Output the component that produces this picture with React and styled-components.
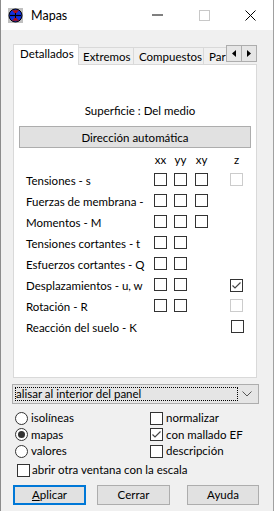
import React from "react";
import styled, { createGlobalStyle, css } from "styled-components";

const Global = createGlobalStyle`
  html, body { margin: 0; padding: 0; background: #ffffff; }
  body { font-family: Lato, "Liberation Sans", sans-serif; font-size: 11.5px; color: #000; }
  * { box-sizing: border-box; }
`;

const Window = styled.div`
  width: 274px;
  height: 511px;
  border-left: 1px solid #8c8c8c;
  border-right: 1px solid #a0a0a0;
  display: flex;
  flex-direction: column;
  background: #f0f0f0;
`;

const TitleBar = styled.div`
  height: 30px;
  background: #ffffff;
  display: flex;
  align-items: center;
  padding-left: 7px;
`;

const TitleText = styled.div`
  font-size: 12.5px;
  margin-left: 8px;
  flex: 1;
`;

const CaptionButton = styled.div`
  width: 46px;
  height: 30px;
  display: flex;
  align-items: center;
  justify-content: center;
`;

const Body = styled.div`
  flex: 1;
  padding: 14px 0 0 12px;
  display: flex;
  flex-direction: column;
`;

const TabStrip = styled.div`
  width: 244px;
  height: 21px;
  display: flex;
  align-items: flex-end;
  margin-bottom: -1px;
  position: relative;
  z-index: 1;
`;

const TabList = styled.div`
  flex: 1;
  height: 100%;
  display: flex;
  align-items: flex-end;
  overflow: hidden;
`;

const Tab = styled.div`
  flex: none;
  width: ${(p) => p.$w}px;
  padding-left: ${(p) => p.$pl}px;
  border: 1px solid #d9d9d9;
  border-bottom: none;
  display: flex;
  align-items: center;
  white-space: nowrap;
  overflow: hidden;
  ${(p) =>
    p.$active
      ? css`
          height: 21px;
          background: #ffffff;
          padding-bottom: 3px;
        `
      : css`
          height: 17px;
          margin-bottom: 1px;
          margin-left: -1px;
          background: #f0f0f0;
        `}
`;

const ArrowGroup = styled.div`
  align-self: flex-start;
  margin-top: 1px;
  display: flex;
`;

const ArrowButton = styled.div`
  width: 16px;
  height: 17px;
  background: #e6e6e6;
  border: 1px solid #adadad;
  margin-left: ${(p) => (p.$first ? 0 : -1)}px;
  display: flex;
  align-items: center;
  justify-content: center;
`;

const Panel = styled.div`
  width: 244px;
  height: 314px;
  background: #ffffff;
  border: 1px solid #d9d9d9;
  display: flex;
  flex-direction: column;
  padding: 38px 5px 0 5px;
`;

const Surface = styled.div`
  text-align: center;
  height: 16px;
  line-height: 16px;
  padding-left: 10px;
`;

const PushButton = styled.div`
  height: ${(p) => p.$h || 20}px;
  width: ${(p) => (p.$w ? `${p.$w}px` : "auto")};
  background: #e1e1e1;
  border: 1px solid ${(p) => (p.$default ? "#0078d7" : "#adadad")};
  box-shadow: ${(p) => (p.$default ? "inset 0 0 0 1px #0078d7" : "none")};
  margin-left: ${(p) => p.$ml || 0}px;
  margin-top: ${(p) => p.$mt || 0}px;
  display: flex;
  align-items: center;
  justify-content: center;
`;

const Grid = styled.div`
  margin-top: 2px;
  padding-left: 7px;
  display: grid;
  grid-template-columns: 128px 20px 21px 35px 13px;
  grid-auto-rows: 21px;
  grid-template-rows: 20px;
  align-items: center;
`;

const Head = styled.div`
  width: 13px;
  display: flex;
  justify-content: center;
  white-space: nowrap;
  line-height: 14px;
`;

const Label = styled.div`
  white-space: nowrap;
  line-height: 14px;
`;

const Box = styled.span`
  width: 13px;
  height: 13px;
  background: #ffffff;
  border: 1px solid ${(p) => (p.$disabled ? "#cccccc" : "#333333")};
  display: inline-flex;
  align-items: center;
  justify-content: center;
  flex: none;
  margin-left: ${(p) => p.$ml || 0}px;
`;

const Check = ({ checked, disabled, ml }) => (
  <Box $disabled={disabled} $ml={ml}>
    {checked && (
      <svg width="11" height="11" viewBox="0 0 11 11">
        <path d="M1.5 5.5 L4 8 L9.5 2.5" fill="none" stroke="#444" strokeWidth="1.2" />
      </svg>
    )}
  </Box>
);

const Dropdown = styled.div`
  width: 247px;
  height: 20px;
  margin: 6px 0 0 -1px;
  background: #e5e5e5;
  border: 1px solid #adadad;
  display: flex;
  align-items: center;
  padding: 2px;
`;

const FocusRect = styled.div`
  width: 223px;
  height: 100%;
  border: 1px dotted #000;
  display: flex;
  align-items: center;
  white-space: nowrap;
  line-height: 14px;
`;

const Chevron = styled.div`
  flex: 1;
  display: flex;
  justify-content: center;
`;

const Options = styled.div`
  margin-top: 6px;
  padding-left: 2px;
  display: grid;
  grid-template-columns: 135px auto;
  grid-auto-rows: 16.5px;
  align-items: center;
`;

const Option = styled.div`
  display: flex;
  align-items: center;
  gap: 3px;
  white-space: nowrap;
  line-height: 14px;
`;

const Radio = styled.span`
  width: 13px;
  height: 13px;
  border-radius: 50%;
  border: 1px solid #333333;
  background: #ffffff;
  display: inline-flex;
  align-items: center;
  justify-content: center;
  flex: none;
  &::after {
    content: "";
    width: 7px;
    height: 7px;
    border-radius: 50%;
    background: ${(p) => (p.$on ? "#333333" : "transparent")};
  }
`;

const ScaleRow = styled.div`
  height: 17px;
  margin-top: 2px;
  padding-left: 4px;
  display: flex;
  align-items: center;
  gap: 2px;
  white-space: nowrap;
  line-height: 14px;
`;

const ButtonRow = styled.div`
  display: flex;
  margin-top: 6px;
`;

const Access = styled.span`
  text-decoration: underline;
`;

const AppIcon = () => (
  <svg width="15" height="15" viewBox="0 0 15 15">
    <rect x="0" y="0" width="15" height="15" fill="#c0c0c0" />
    <circle cx="7.5" cy="7.5" r="6.5" fill="#1030e0" stroke="#000" strokeWidth="1" />
    <path d="M4 2.2 L11 2.2 L7.5 6 Z" fill="#b01010" />
    <path d="M4 12.8 L11 12.8 L7.5 9 Z" fill="#b01010" />
    <path d="M2 7.5 H13" stroke="#000" strokeWidth="1.2" />
    <path d="M7.5 5 V10" stroke="#000" strokeWidth="1" />
  </svg>
);

const rows = [
  { label: "Tensiones - s", xx: 1, yy: 1, xy: 1, z: "disabled" },
  { label: "Fuerzas de membrana -", xx: 1, yy: 1, xy: 1 },
  { label: "Momentos - M", xx: 1, yy: 1, xy: 1 },
  { label: "Tensiones cortantes - t", xx: 1, yy: 1 },
  { label: "Esfuerzos cortantes - Q", xx: 1, yy: 1 },
  { label: "Desplazamientos - u, w", xx: 1, yy: 1, z: "checked" },
  { label: "Rotación - R", xx: 1, yy: 1, z: "disabled" },
  { label: "Reacción del suelo - K", z: "normal" },
];

export default function App() {
  return (
    <>
      <Global />
      <Window>
        <TitleBar>
          <AppIcon />
          <TitleText>Mapas</TitleText>
          <CaptionButton>
            <svg width="12" height="2" viewBox="0 0 12 2">
              <path d="M0 1 H11" stroke="#000" strokeWidth="1" />
            </svg>
          </CaptionButton>
          <CaptionButton>
            <svg width="11" height="11" viewBox="0 0 11 11">
              <rect x="0.5" y="0.5" width="10" height="10" fill="none" stroke="#c8c8c8" />
            </svg>
          </CaptionButton>
          <CaptionButton>
            <svg width="11" height="11" viewBox="0 0 11 11">
              <path d="M0.5 0.5 L10.5 10.5 M10.5 0.5 L0.5 10.5" stroke="#000" strokeWidth="1" />
            </svg>
          </CaptionButton>
        </TitleBar>
        <Body>
          <TabStrip>
            <TabList>
              <Tab $active $w={66} $pl={6}>Detallados</Tab>
              <Tab $w={56} $pl={4}>Extremos</Tab>
              <Tab $w={71} $pl={5}>Compuestos</Tab>
              <Tab $w={40} $pl={5}>Par</Tab>
            </TabList>
            <ArrowGroup>
              <ArrowButton $first>
                <svg width="4" height="7" viewBox="0 0 4 7">
                  <path d="M4 0 L0 3.5 L4 7 Z" fill="#000" />
                </svg>
              </ArrowButton>
              <ArrowButton>
                <svg width="4" height="7" viewBox="0 0 4 7">
                  <path d="M0 0 L4 3.5 L0 7 Z" fill="#000" />
                </svg>
              </ArrowButton>
            </ArrowGroup>
          </TabStrip>
          <Panel>
            <Surface>Superficie : Del medio</Surface>
            <PushButton $h={22} $mt={7}>Dirección automática</PushButton>
            <Grid>
              <span />
              <Head>xx</Head>
              <Head>yy</Head>
              <Head>xy</Head>
              <Head>z</Head>
              {rows.map((r) => (
                <React.Fragment key={r.label}>
                  <Label>{r.label}</Label>
                  <div>{r.xx ? <Check /> : null}</div>
                  <div>{r.yy ? <Check /> : null}</div>
                  <div>{r.xy ? <Check /> : null}</div>
                  <div>
                    {r.z ? (
                      <Check
                        disabled={r.z === "disabled"}
                        checked={r.z === "checked"}
                        ml={r.z === "normal" ? 1 : 0}
                      />
                    ) : null}
                  </div>
                </React.Fragment>
              ))}
            </Grid>
          </Panel>
          <Dropdown>
            <FocusRect>alisar al interior del panel</FocusRect>
            <Chevron>
              <svg width="10" height="6" viewBox="0 0 10 6">
                <path d="M0.5 0.5 L5 5 L9.5 0.5" fill="none" stroke="#555" strokeWidth="1" />
              </svg>
            </Chevron>
          </Dropdown>
          <Options>
            <Option><Radio />isolíneas</Option>
            <Option><Check />normalizar</Option>
            <Option><Radio $on />mapas</Option>
            <Option><Check checked />con mallado EF</Option>
            <Option><Radio />valores</Option>
            <Option><Check />descripción</Option>
          </Options>
          <ScaleRow><Check />abrir otra ventana con la escala</ScaleRow>
          <ButtonRow>
            <PushButton $w={73} $default><Access>A</Access>plicar</PushButton>
            <PushButton $w={73} $ml={11}>Cerrar</PushButton>
            <PushButton $w={72} $ml={17}>Ayuda</PushButton>
          </ButtonRow>
        </Body>
      </Window>
    </>
  );
}
